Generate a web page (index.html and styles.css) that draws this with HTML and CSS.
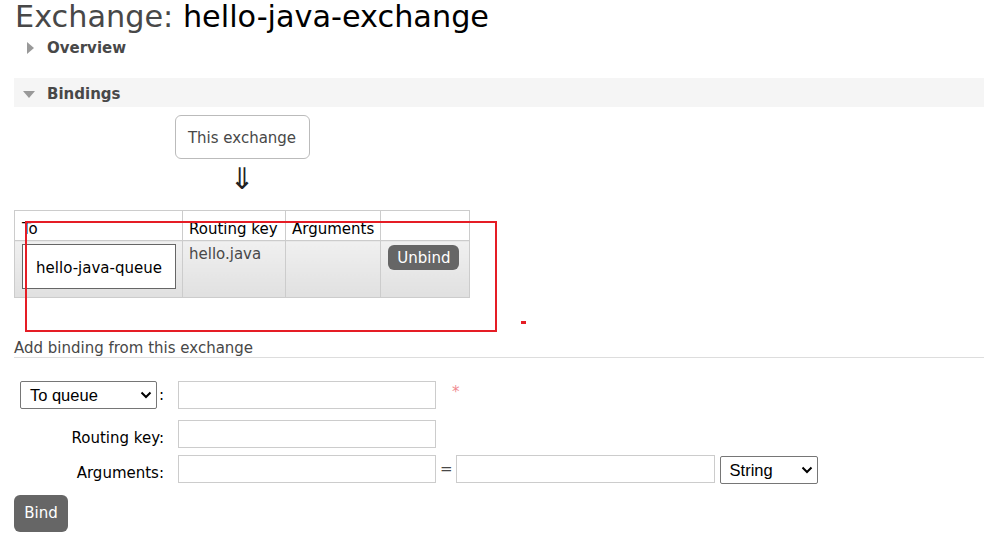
FILE: index.html
```html
<!DOCTYPE html>
<html>
<head>
<meta charset="utf-8">
<link rel="stylesheet" href="styles.css">
</head>
<body>
<h1 class="title"><span class="title-label">Exchange:</span> hello-java-exchange</h1>
<div class="section-head closed"><span class="tri tri-right"></span>Overview</div>
<div class="section-head open"><span class="tri tri-down"></span>Bindings</div>
<div class="bindings">
  <div class="diagram">
    <div class="this-exchange">This exchange</div>
    <div class="arrow">⇓</div>
    <table class="btable">
      <thead>
        <tr><th class="c1">To</th><th class="c2">Routing key</th><th class="c3">Arguments</th><th class="c4"></th></tr>
      </thead>
      <tbody>
        <tr>
          <td class="c1"><div class="queue-box">hello-java-queue</div></td>
          <td class="c2">hello.java</td>
          <td class="c3"></td>
          <td class="c4"><span class="btn-small">Unbind</span></td>
        </tr>
      </tbody>
    </table>
  </div>
  <div class="annot-box"></div>
  <div class="annot-dash"></div>
</div>
<div class="add-title">Add binding from this exchange</div>
<form class="form">
  <div class="frow">
    <div class="flabel"><span class="select sel-dest">To queue<svg class="chev" width="12" height="8" viewBox="0 0 12 8"><path d="M1.5 1.5 L6 6 L10.5 1.5" fill="none" stroke="#000" stroke-width="2"/></svg></span><span class="colon">:</span></div>
    <span class="input"></span>
    <span class="req">*</span>
  </div>
  <div class="frow">
    <div class="flabel">Routing key:</div>
    <span class="input"></span>
  </div>
  <div class="frow">
    <div class="flabel">Arguments:</div>
    <span class="input"></span>
    <span class="eq">=</span>
    <span class="input input2"></span>
    <span class="select sel-type">String<svg class="chev" width="12" height="8" viewBox="0 0 12 8"><path d="M1.5 1.5 L6 6 L10.5 1.5" fill="none" stroke="#000" stroke-width="2"/></svg></span>
  </div>
  <div class="bind-row"><span class="btn">Bind</span></div>
</form>
</body>
</html>
```
FILE: styles.css
```css
html, body { margin: 0; padding: 0; background: #fff; }
body {
  font-family: "DejaVu Sans", Verdana, sans-serif;
  font-size: 15px;
  color: #484848;
  padding-left: 14px;
  width: 970px;
  overflow: hidden;
}
.title {
  margin: 0;
  padding: 0 0 0 1px;
  font-weight: normal;
  font-size: 30.3px;
  line-height: 34px;
  color: #000;
  white-space: nowrap;
}
.title-label { color: #484848; }
.section-head {
  display: flex;
  align-items: center;
  font-weight: bold;
  font-size: 15px;
  color: #484848;
  padding-left: 12px;
  height: 29px;
}
.section-head.closed { margin-top: 0; height: 27px; }
.section-head.open { margin-top: 17px; background: #f5f5f5; padding-top: 2px; height: 27px; }
.tri { display: inline-block; width: 0; height: 0; }
.tri-right { border-top: 6px solid transparent; border-bottom: 6px solid transparent; border-left: 7px solid #999; margin-left: 1px; margin-right: 13px; }
.tri-down { border-left: 6px solid transparent; border-right: 6px solid transparent; border-top: 7px solid #999; margin-left: -3px; margin-right: 12px; margin-top: 1px; }

.bindings { position: relative; }
.diagram { width: 456px; display: flex; flex-direction: column; align-items: center; padding-top: 8px; }
.this-exchange {
  width: 133px;
  border: 1px solid #bbb; border-radius: 6px;
  display: flex; align-items: center; justify-content: center;
  color: #484848; box-sizing: content-box; padding-top: 1px; height: 41px;
}
.arrow { font-size: 30px; line-height: 30px; color: #222; margin-top: 5px; height: 46px; font-weight: normal; }
.btable { border-collapse: collapse; width: 456px; color: #000; }
.btable th { font-weight: normal; text-align: left; border: 1px solid #ccc; height: 29px; padding: 0 6px; vertical-align: bottom; line-height: 22px; }
.btable td { border: 1px solid #ccc; vertical-align: top; padding: 3px 6px 0; height: 52px; color: #484848; background: linear-gradient(#f0f0f0, #e0e0e0); }
.btable th.c1 { width: 154px; padding-left: 7px; }
.btable th.c2 { width: 90px; }
.btable th.c3 { width: 82px; }
.btable td.c1 { padding: 3px 6px 0 7px; }
.btable td.c2 { padding-top: 4px; }
.btable td.c4 { padding-top: 4px; padding-left: 7px; }
.queue-box {
  width: 152px; border: 1px solid #666; background: #fff; color: #000;
  display: flex; align-items: center; justify-content: center; padding-top: 2px; height: 41px;
  box-sizing: content-box;
}
.btn-small {
  display: inline-block; background: #666; color: #fff; border-radius: 6px;
  padding: 0 9px; height: 25px; line-height: 26px;
}
.annot-box {
  position: absolute; left: 11px; top: 114px; width: 468px; height: 107px;
  border: 2px solid #e51d25;
}
.annot-dash { position: absolute; left: 507px; top: 214px; width: 5px; height: 3px; background: #e51d25; }

.add-title {
  margin-top: 41px; color: #484848; border-bottom: 1px solid #ddd; padding-bottom: 0; line-height: 18px;
}
.form { margin-top: 23px; }
.frow { display: flex; align-items: center; margin-bottom: 11px; }
.frow:nth-child(2) { margin-bottom: 6px; }
.flabel { width: 150px; text-align: right; color: #000; display: flex; justify-content: flex-end; align-items: center; padding-top: 8px; margin-right: 14px; }
.frow:first-child .flabel { padding-top: 0; }
.input { display: inline-block; width: 256px; height: 26px; border: 1px solid #ccc; box-sizing: content-box; }
.input2 { width: 257px; }
.req { color: #f08a8f; margin-left: 16px; margin-top: -6px; font-size: 15px; }
.eq { color: #484848; margin: 0 3px 0 4px; }
.select {
  display: inline-flex; align-items: center; justify-content: space-between;
  border: 1px solid #767676; border-radius: 2px; height: 26px; color: #000;
  font-family: "Liberation Sans", Arial, sans-serif; font-size: 16.5px; box-sizing: content-box;
}
.sel-dest { width: 122px; padding: 0 4px 0 9px; margin-right: 2px; }
.colon { margin-right: 0; }
.sel-type { width: 83px; padding: 0 4px 0 9px; margin-left: 5px; margin-top: 2px; }
.btn {
  display: inline-block; background: #666; color: #fff; border-radius: 6px;
  width: 54px; height: 37px; line-height: 37px; text-align: center;
}
```
